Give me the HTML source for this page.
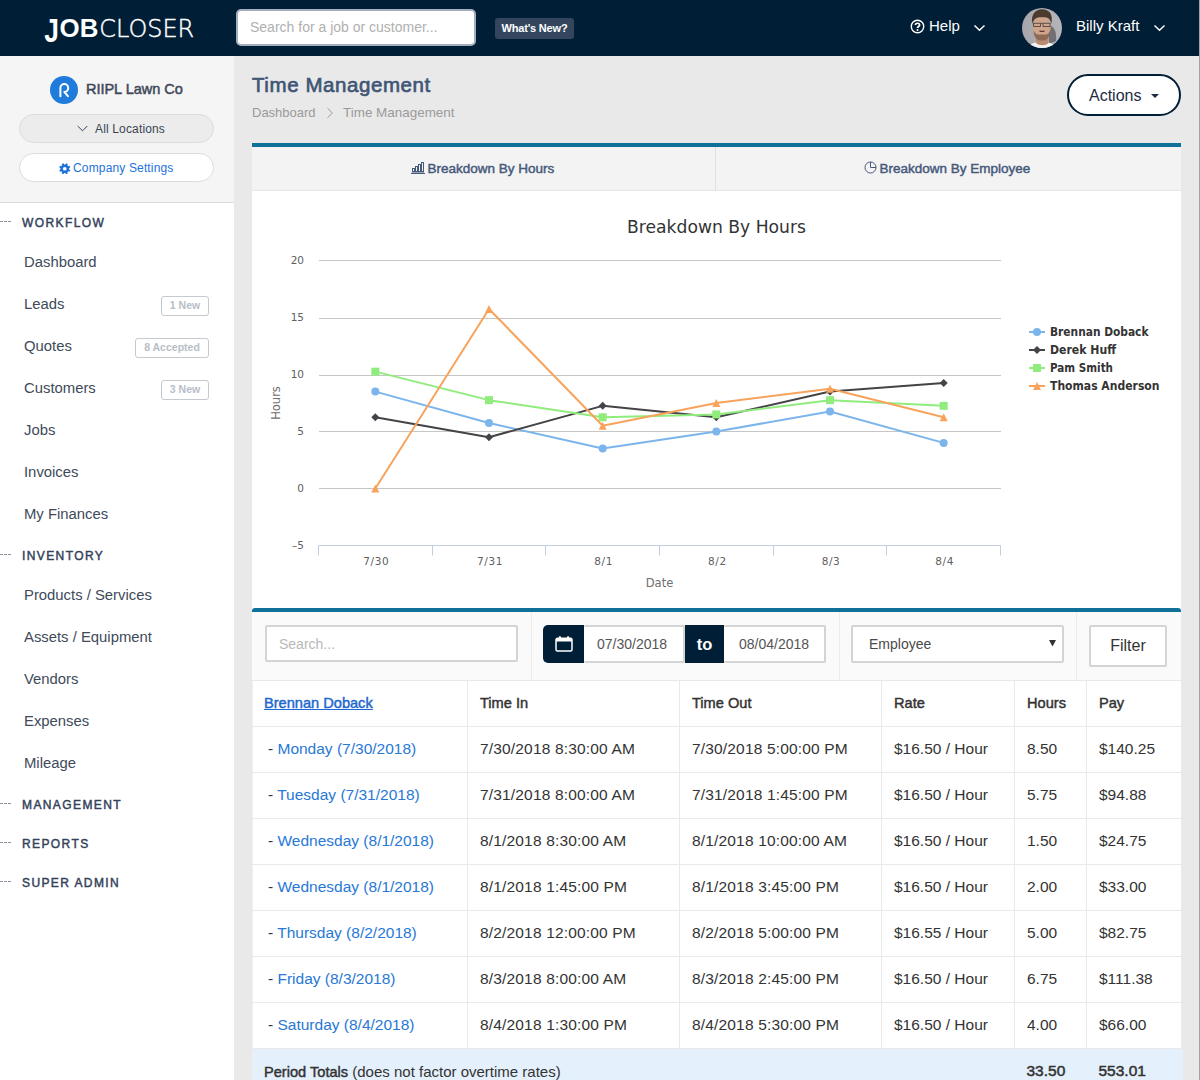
<!DOCTYPE html>
<html lang="en">
<head>
<meta charset="utf-8">
<title>Time Management - JobCloser</title>
<style>
*{box-sizing:border-box;margin:0;padding:0}
html,body{width:1200px;height:1080px;overflow:hidden}
body{position:relative;background:#e9e9e9;font-family:"Liberation Sans",sans-serif;font-size:15px;color:#333;}
.abs{position:absolute}
a{text-decoration:none;color:inherit}
/* header */
#hdr{position:absolute;left:0;top:0;width:1200px;height:56px;background:#001e36;}
#srch{position:absolute;left:236px;top:9px;width:240px;height:37px;background:#fff;border:2px solid #a3afbe;border-radius:5px;color:#b0b0b0;font-size:14px;line-height:33px;padding-left:12px;white-space:nowrap}
#wn{position:absolute;left:495px;top:18px;width:79px;height:21px;background:#33465e;border-radius:3px;color:#fff;font-weight:bold;font-size:11px;line-height:21px;text-align:center;white-space:nowrap;letter-spacing:-.2px}
.htxt{position:absolute;color:#fff;font-size:15px;line-height:20px;top:16.400px;white-space:nowrap}
#avatar{position:absolute;left:1022px;top:8px;width:40px;height:40px;border-radius:50%;overflow:hidden}
/* sidebar */
#side{position:absolute;left:0;top:56px;width:234px;height:1024px;background:#fff}
#sidetop{position:absolute;left:0;top:0;width:234px;height:147px;background:#f5f5f5;border-bottom:1px solid #dcdcdc}
#co{position:absolute;left:50px;top:20px;width:28px;height:28px;border-radius:50%;background:#1f7bdc}
#coname{position:absolute;left:86px;top:23px;font-size:14.5px;font-weight:normal;-webkit-text-stroke:.5px #3f4858;color:#3f4858;line-height:20px;white-space:nowrap;letter-spacing:-.02px}
.pill{position:absolute;left:19px;width:195px;height:29px;border-radius:15px;border:1px solid #dcdcdc;font-size:12px;letter-spacing:.15px;line-height:28px;text-align:center;white-space:nowrap}
#loc{top:58px;background:#ececec;color:#3a4454;padding-left:9px}
#cset{top:97px;background:#fff;color:#1c72dd;padding-right:2px}
.sec{position:absolute;left:22px;font-size:12px;font-weight:normal;-webkit-text-stroke:.45px #33425a;letter-spacing:1.4px;color:#33425a;line-height:16px;white-space:nowrap;margin-top:.3px}
.sec:before{content:"";position:absolute;left:-22px;top:6px;width:11px;height:0;border-top:1px dashed #8a93a0}
.nav{position:absolute;left:24px;font-size:14.85px;color:#404a5a;line-height:20px;white-space:nowrap}
.bdg{position:absolute;height:20px;border:1px solid #c4cacf;border-radius:3px;font-size:10.5px;font-weight:bold;color:#b7bec7;line-height:17.500px;text-align:center;background:#fff;white-space:nowrap}
/* main */
#title{position:absolute;left:252px;top:72px;font-size:20.5px;font-weight:normal;-webkit-text-stroke:.65px #3f5575;color:#3f5575;line-height:26px;white-space:nowrap;letter-spacing:.58px}
.bc{position:absolute;top:104px;font-size:13px;color:#9a9a9a;line-height:18px;white-space:nowrap}
#actions{position:absolute;left:1067px;top:74px;width:114px;height:42px;border:2px solid #001e36;border-radius:21px;background:#fff;color:#1d2c44;font-size:16px;line-height:38px;white-space:nowrap}
#card{position:absolute;left:252px;top:143px;width:929px;height:937px;background:#fff}
.bluebar{position:absolute;left:0;width:929px;height:4px;background:#0f7098}
#tabs{position:absolute;left:0;top:4px;width:929px;height:44px;background:#f3f3f3;border-bottom:1px solid #e6e6e6}
.tab{position:absolute;top:0;height:43px;line-height:43px;font-size:13.500px;font-weight:normal;-webkit-text-stroke:.45px #46597a;color:#46597a;white-space:nowrap}
#filters{position:absolute;left:0;top:469px;width:929px;height:69px;background:#fafafa;border-bottom:1px solid #e8e8e8}
.inp{position:absolute;background:#fff;border:2px solid #d4d4d4;border-radius:2px;font-size:14px;color:#555;white-space:nowrap}
.dk{position:absolute;background:#001e36;color:#fff}
table{position:absolute;left:0;top:538px;width:929px;border-left:1px solid #efefef;border-collapse:collapse;table-layout:fixed}
td,th{height:46px;border-bottom:1px solid #e9e9e9;border-left:1px solid #e9e9e9;padding:0 0 0 12px;text-align:left;font-size:15.5px;white-space:nowrap;vertical-align:middle;color:#333}
td:first-child,th:first-child{border-left:none;padding-left:11px}
th{font-weight:normal;-webkit-text-stroke:.45px;height:45px;font-size:14.600px}
td.ts{letter-spacing:.17px}
td.d{letter-spacing:0}
td a{color:#2878d6}
tr.tot td{background:#e4f0fb;border-left:none;height:46px}
#rstrip{position:absolute;left:1199px;top:0;width:1px;height:1080px;background:#a2a2a2}
</style>
</head>
<body>
<div id="hdr">
  <svg id="logo" class="abs" style="left:40px;top:0" width="160" height="56" viewBox="40 0 160 56" fill="#fff">
    <text transform="translate(44.2 42.2) scale(.8 1)" font-family="Liberation Sans, sans-serif" font-weight="bold" font-size="33">J</text>
    <text x="59.6" y="37.2" font-family="Liberation Sans, sans-serif" font-weight="bold" font-size="25.8" textLength="38.8" lengthAdjust="spacingAndGlyphs">OB</text>
    <text x="99.2" y="37.2" stroke="#fff" stroke-width=".45" font-family="DejaVu Sans Light, DejaVu Sans, Liberation Sans, sans-serif" font-weight="200" font-size="25.4" textLength="95" lengthAdjust="spacingAndGlyphs">CLOSER</text>
  </svg>
  <div id="srch">Search for a job or customer...</div>
  <div id="wn">What's New?</div>
  <svg class="abs" style="left:909.700px;top:18.600px" width="15" height="15" viewBox="0 0 15 15"><circle cx="7.5" cy="7.5" r="6.2" fill="none" stroke="#fff" stroke-width="1.4"/><path d="M5.4 6.1 C5.4 3.6 9.6 3.6 9.6 6.1 C9.6 7.6 7.5 7.5 7.5 9.1" fill="none" stroke="#fff" stroke-width="1.700"/><circle cx="7.500" cy="11" r="1" fill="#fff"/></svg>
  <div class="htxt" style="left:929px">Help</div>
  <svg class="abs" style="left:972.500px;top:23.500px" width="13" height="9" viewBox="0 0 13 9"><path d="M1.500 1.500 L6.500 6.200 L11.500 1.500" fill="none" stroke="#fff" stroke-width="1.5"/></svg>
  <div id="avatar"><svg width="40" height="40" viewBox="0 0 40 40"><defs><filter id="bl" x="-20%" y="-20%" width="140%" height="140%"><feGaussianBlur stdDeviation=".5"/></filter><linearGradient id="abg" x1="0" x2="1"><stop offset="0" stop-color="#a6a6ab"/><stop offset="1" stop-color="#b4b4b9"/></linearGradient></defs><rect width="40" height="40" fill="url(#abg)"/><g filter="url(#bl)"><path d="M27 17 C31 18 35 22 34 33 L27 36 Z" fill="#6f6f75"/><path d="M5 44 C7 35 12 34 20 34 C28 34 33 35 35 44 Z" fill="#f2f2f2"/><path d="M14 28 H26.500 V35 C24 38 17 38 14 35 Z" fill="#b98c72"/><ellipse cx="19.800" cy="19.500" rx="8.800" ry="11.500" fill="#cfa48b"/><path d="M11.500 22 C12 31.500 16 32.500 20 32.500 C24 32.500 27.500 31.500 28.300 22 C27 26.500 24 27 20 26.500 C16 27 13 26.500 11.500 22Z" fill="#8d6a55"/><path d="M10.300 16 C8.500 6 14 1.300 20 1.300 C27 1.300 31.500 6 29.300 16 C28.500 11 26 8.500 20 9.300 C14.500 8.500 11.500 11 10.300 16Z" fill="#4b3a2e"/><path d="M11 15.300 H28.700 M11.500 15.500 V18.500 H18.500 V15.500 M21 15.500 V18.500 H28 V15.500" fill="none" stroke="#3f3a3a" stroke-width=".8"/><path d="M17.500 22.800 Q20 24 22.500 22.800" stroke="#5a3a34" stroke-width="1.300" fill="none"/></g></svg></div>
  <div class="htxt" style="left:1076px">Billy Kraft</div>
  <svg class="abs" style="left:1153px;top:23.500px" width="13" height="9" viewBox="0 0 13 9"><path d="M1.500 1.500 L6.500 6.200 L11.500 1.500" fill="none" stroke="#fff" stroke-width="1.5"/></svg>
</div>

<div id="side">
  <div id="sidetop">
    <div id="co"><svg width="28" height="28" viewBox="0 0 28 28"><path d="M10.400 20.200 V12 A3.900 3.900 0 1 1 14.300 15.900 L17.900 20.200" fill="none" stroke="#fff" stroke-width="2" stroke-linecap="round" stroke-linejoin="round"/></svg></div>
    <div id="coname">RIIPL Lawn Co</div>
    <div class="pill" id="loc"><svg style="vertical-align:middle;margin-right:7px;position:relative;top:-1px" width="11" height="7" viewBox="0 0 11 7"><path d="M.7 1 L5.5 5.800 L10.300 1" fill="none" stroke="#3a4454" stroke-width="1"/></svg>All Locations</div>
    <div class="pill" id="cset"><svg style="vertical-align:middle;margin-left:1.500px;margin-right:2.500px;position:relative;top:-.5px" width="11.500" height="11.500" viewBox="0 0 24 24"><path fill="#1c72dd" fill-rule="evenodd" d="M21.09 13.44 L23.53 14.53 L21.94 18.36 L19.44 17.41 L17.41 19.44 L18.36 21.94 L14.53 23.53 L13.44 21.09 L10.56 21.09 L9.47 23.53 L5.64 21.94 L6.59 19.44 L4.56 17.41 L2.06 18.36 L0.47 14.53 L2.91 13.44 L2.91 10.56 L0.47 9.47 L2.06 5.64 L4.56 6.59 L6.59 4.56 L5.64 2.06 L9.47 0.47 L10.56 2.91 L13.44 2.91 L14.53 0.47 L18.36 2.06 L17.41 4.56 L19.44 6.59 L21.94 5.64 L23.53 9.47 L21.09 10.56Z M15.90 12.00 A3.9 3.9 0 1 0 8.10 12.00 A3.9 3.9 0 1 0 15.90 12.00Z"/></svg>Company Settings</div>
  </div>
  <div class="sec" style="top:159px">WORKFLOW</div>
  <div class="nav" style="top:196px">Dashboard</div>
  <div class="nav" style="top:238px">Leads</div><div class="bdg" style="left:161px;top:240px;width:48px">1 New</div>
  <div class="nav" style="top:280px">Quotes</div><div class="bdg" style="left:135px;top:282px;width:74px">8 Accepted</div>
  <div class="nav" style="top:322px">Customers</div><div class="bdg" style="left:161px;top:324px;width:48px">3 New</div>
  <div class="nav" style="top:364px">Jobs</div>
  <div class="nav" style="top:406px">Invoices</div>
  <div class="nav" style="top:448px">My Finances</div>
  <div class="sec" style="top:492px">INVENTORY</div>
  <div class="nav" style="top:529px">Products / Services</div>
  <div class="nav" style="top:571px">Assets / Equipment</div>
  <div class="nav" style="top:613px">Vendors</div>
  <div class="nav" style="top:655px">Expenses</div>
  <div class="nav" style="top:697px">Mileage</div>
  <div class="sec" style="top:741px">MANAGEMENT</div>
  <div class="sec" style="top:780px">REPORTS</div>
  <div class="sec" style="top:819px">SUPER ADMIN</div>
</div>

<div id="title">Time Management</div>
<div class="bc" style="left:252px">Dashboard</div>
<svg class="abs" style="left:326.300px;top:106.500px" width="8" height="12" viewBox="0 0 8 12"><path d="M1.500 1.300 L6.300 6 L1.500 10.700" fill="none" stroke="#9a9a9a" stroke-width="1"/></svg>
<div class="bc" style="left:343px;font-size:13.45px">Time Management</div>
<div id="actions"><span style="position:absolute;left:20px;top:1px">Actions</span><svg class="abs" style="left:82px;top:18px" width="8" height="4" viewBox="0 0 8 4"><path d="M0 0 H8 L4 4Z" fill="#1d2c44"/></svg></div>

<div id="card">
  <div class="bluebar" style="top:0"></div>
  <div id="tabs">
    <div class="abs" style="left:463px;top:0;width:1px;height:43px;background:#e0e0e0"></div>
    <svg class="abs" style="left:159px;top:15px" width="14" height="12" viewBox="0 0 14 12"><g fill="none" stroke="#46597a" stroke-width="1"><rect x="1.5" y="6.5" width="2" height="3.500"/><rect x="4.500" y="4.500" width="2" height="5.500"/><rect x="7.500" y="2.500" width="2" height="7.500"/><rect x="10.500" y=".5" width="2" height="9.500"/><path d="M0 11.500 H14"/></g></svg>
    <div class="tab" style="left:175.500px">Breakdown By Hours</div>
    <svg class="abs" style="left:612px;top:14px" width="13" height="13" viewBox="0 0 13 13"><g fill="none" stroke="#46597a" stroke-width="1"><circle cx="6.500" cy="6.500" r="5.500"/><path d="M6.500 1 V6.500 H12"/></g></svg>
    <div class="tab" style="left:627.500px">Breakdown By Employee</div>
  </div>
  <!--CHART_S--><svg class="abs" style="left:0;top:48px" width="929" height="417" viewBox="0 0 929 417" font-family="DejaVu Sans, Liberation Sans, sans-serif">
<text x="464.5" y="42" text-anchor="middle" font-size="17" fill="#333333" textLength="179" lengthAdjust="spacingAndGlyphs">Breakdown By Hours</text>
<path d="M67 69.5 H749" stroke="#c6c6c6" stroke-width="1" fill="none"/>
<path d="M67 127.5 H749" stroke="#c6c6c6" stroke-width="1" fill="none"/>
<path d="M67 184.5 H749" stroke="#c6c6c6" stroke-width="1" fill="none"/>
<path d="M67 240.5 H749" stroke="#c6c6c6" stroke-width="1" fill="none"/>
<path d="M67 297.5 H749" stroke="#c6c6c6" stroke-width="1" fill="none"/>
<path d="M66.5 354.5 H748.5" stroke="#c0d0e0" stroke-width="1" fill="none"/>
<path d="M66.5 354.5 V364.5" stroke="#c0d0e0" stroke-width="1" fill="none"/>
<path d="M180.5 354.5 V364.5" stroke="#c0d0e0" stroke-width="1" fill="none"/>
<path d="M293.5 354.5 V364.5" stroke="#c0d0e0" stroke-width="1" fill="none"/>
<path d="M407.5 354.5 V364.5" stroke="#c0d0e0" stroke-width="1" fill="none"/>
<path d="M521.5 354.5 V364.5" stroke="#c0d0e0" stroke-width="1" fill="none"/>
<path d="M634.5 354.5 V364.5" stroke="#c0d0e0" stroke-width="1" fill="none"/>
<path d="M748.5 354.5 V364.5" stroke="#c0d0e0" stroke-width="1" fill="none"/>
<text x="52" y="72.8" text-anchor="end" font-size="10.5" fill="#606060">20</text>
<text x="52" y="129.8" text-anchor="end" font-size="10.5" fill="#606060">15</text>
<text x="52" y="186.8" text-anchor="end" font-size="10.5" fill="#606060">10</text>
<text x="52" y="243.8" text-anchor="end" font-size="10.5" fill="#606060">5</text>
<text x="52" y="300.8" text-anchor="end" font-size="10.5" fill="#606060">0</text>
<text x="52" y="357.8" text-anchor="end" font-size="10.5" fill="#606060">–5</text>
<text x="124.33" y="374" text-anchor="middle" font-size="10.5" fill="#606060" letter-spacing=".6">7/30</text>
<text x="238.0" y="374" text-anchor="middle" font-size="10.5" fill="#606060" letter-spacing=".6">7/31</text>
<text x="351.67" y="374" text-anchor="middle" font-size="10.5" fill="#606060" letter-spacing=".6">8/1</text>
<text x="465.33" y="374" text-anchor="middle" font-size="10.5" fill="#606060" letter-spacing=".6">8/2</text>
<text x="579.0" y="374" text-anchor="middle" font-size="10.5" fill="#606060" letter-spacing=".6">8/3</text>
<text x="692.67" y="374" text-anchor="middle" font-size="10.5" fill="#606060" letter-spacing=".6">8/4</text>
<text x="407.5" y="396" text-anchor="middle" font-size="11.5" fill="#707070">Date</text>
<text transform="translate(28 212) rotate(-90)" text-anchor="middle" font-size="11.5" fill="#707070">Hours</text>
<path d="M123.33 200.6 L237.0 231.95 L350.67 257.6 L464.33 240.5 L578.0 220.55 L691.67 251.9" stroke="#7cb5ec" stroke-width="2" fill="none" stroke-linejoin="round" stroke-linecap="round"/>
<circle cx="123.33" cy="200.6" r="4" fill="#7cb5ec"/>
<circle cx="237.0" cy="231.95" r="4" fill="#7cb5ec"/>
<circle cx="350.67" cy="257.6" r="4" fill="#7cb5ec"/>
<circle cx="464.33" cy="240.5" r="4" fill="#7cb5ec"/>
<circle cx="578.0" cy="220.55" r="4" fill="#7cb5ec"/>
<circle cx="691.67" cy="251.9" r="4" fill="#7cb5ec"/>
<path d="M123.33 226.25 L237.0 246.2 L350.67 214.85 L464.33 226.25 L578.0 200.6 L691.67 192.05" stroke="#434348" stroke-width="2" fill="none" stroke-linejoin="round" stroke-linecap="round"/>
<path d="M123.33 222.25 L127.33 226.25 L123.33 230.25 L119.33 226.25Z" fill="#434348"/>
<path d="M237.0 242.2 L241.0 246.2 L237.0 250.2 L233.0 246.2Z" fill="#434348"/>
<path d="M350.67 210.85 L354.67 214.85 L350.67 218.85 L346.67 214.85Z" fill="#434348"/>
<path d="M464.33 222.25 L468.33 226.25 L464.33 230.25 L460.33 226.25Z" fill="#434348"/>
<path d="M578.0 196.6 L582.0 200.6 L578.0 204.6 L574.0 200.6Z" fill="#434348"/>
<path d="M691.67 188.05 L695.67 192.05 L691.67 196.05 L687.67 192.05Z" fill="#434348"/>
<path d="M123.33 180.65 L237.0 209.15 L350.67 226.25 L464.33 223.4 L578.0 209.15 L691.67 214.85" stroke="#90ed7d" stroke-width="2" fill="none" stroke-linejoin="round" stroke-linecap="round"/>
<rect x="119.33" y="176.65" width="8" height="8" fill="#90ed7d"/>
<rect x="233.0" y="205.15" width="8" height="8" fill="#90ed7d"/>
<rect x="346.67" y="222.25" width="8" height="8" fill="#90ed7d"/>
<rect x="460.33" y="219.4" width="8" height="8" fill="#90ed7d"/>
<rect x="574.0" y="205.15" width="8" height="8" fill="#90ed7d"/>
<rect x="687.67" y="210.85" width="8" height="8" fill="#90ed7d"/>
<path d="M123.33 297.5 L237.0 117.95 L350.67 234.8 L464.33 212.0 L578.0 197.75 L691.67 226.25" stroke="#f7a35c" stroke-width="2" fill="none" stroke-linejoin="round" stroke-linecap="round"/>
<path d="M123.33 293.5 L127.33 301.5 L119.33 301.5Z" fill="#f7a35c"/>
<path d="M237.0 113.95 L241.0 121.95 L233.0 121.95Z" fill="#f7a35c"/>
<path d="M350.67 230.8 L354.67 238.8 L346.67 238.8Z" fill="#f7a35c"/>
<path d="M464.33 208.0 L468.33 216.0 L460.33 216.0Z" fill="#f7a35c"/>
<path d="M578.0 193.75 L582.0 201.75 L574.0 201.75Z" fill="#f7a35c"/>
<path d="M691.67 222.25 L695.67 230.25 L687.67 230.25Z" fill="#f7a35c"/>
<path d="M777 141 H793" stroke="#7cb5ec" stroke-width="2"/>
<circle cx="785" cy="141" r="4" fill="#7cb5ec"/>
<text x="798" y="145" font-size="11.5" font-weight="bold" fill="#333333" textLength="98.5" lengthAdjust="spacingAndGlyphs">Brennan Doback</text>
<path d="M777 159 H793" stroke="#434348" stroke-width="2"/>
<path d="M785 155 L789 159 L785 163 L781 159Z" fill="#434348"/>
<text x="798" y="163" font-size="11.5" font-weight="bold" fill="#333333" textLength="66" lengthAdjust="spacingAndGlyphs">Derek Huff</text>
<path d="M777 177 H793" stroke="#90ed7d" stroke-width="2"/>
<rect x="781" y="173" width="8" height="8" fill="#90ed7d"/>
<text x="798" y="181" font-size="11.5" font-weight="bold" fill="#333333" textLength="63" lengthAdjust="spacingAndGlyphs">Pam Smith</text>
<path d="M777 195 H793" stroke="#f7a35c" stroke-width="2"/>
<path d="M785 191 L789 199 L781 199Z" fill="#f7a35c"/>
<text x="798" y="199" font-size="11.5" font-weight="bold" fill="#333333" textLength="109.5" lengthAdjust="spacingAndGlyphs">Thomas Anderson</text>
</svg><!--CHART_E-->
  <div class="bluebar" style="top:465px;border-radius:3px 3px 0 0"></div>
  <div id="filters">
    <div class="abs" style="left:279px;top:0;width:1px;height:68px;background:#ececec"></div>
    <div class="abs" style="left:587px;top:0;width:1px;height:68px;background:#ececec"></div>
    <div class="abs" style="left:824px;top:0;width:1px;height:68px;background:#ececec"></div>
    <div class="inp" style="left:13px;top:13px;width:253px;height:37px;line-height:35px;padding-left:12px;color:#b8b8b8">Search...</div>
    <div class="dk" style="left:291px;top:13px;width:41px;height:38px;border-radius:5px 0 0 5px"><svg class="abs" style="left:12px;top:11px" width="18" height="16" viewBox="0 0 18 16"><rect x="1" y="2.300" width="16" height="12.700" rx="1.500" fill="none" stroke="#fff" stroke-width="1.500"/><rect x="1" y="2.300" width="16" height="3.200" fill="#fff"/><rect x="3.800" y=".3" width="2.200" height="3" rx=".7" fill="#fff"/><rect x="12" y=".3" width="2.200" height="3" rx=".7" fill="#fff"/></svg></div>
    <div class="inp" style="left:332px;top:13px;width:101px;height:38px;line-height:34px;padding-left:13px;border-left:none">07/30/2018</div>
    <div class="dk" style="left:433px;top:13px;width:39px;height:38px;line-height:39px;text-align:center;font-weight:bold;font-size:16.5px">to</div>
    <div class="inp" style="left:472px;top:13px;width:102px;height:38px;line-height:34px;padding-left:15px;border-left:none">08/04/2018</div>
    <div class="inp" style="left:599px;top:13px;width:213px;height:38px;line-height:34px;padding-left:16px;font-size:14px;color:#4a4a4a">Employee<svg class="abs" style="right:6px;top:13px" width="7" height="7" viewBox="0 0 7 7"><path d="M0 0 H7 L3.5 6.5Z" fill="#333"/></svg></div>
    <div class="inp" style="left:837px;top:13px;width:78px;height:42px;line-height:38px;text-align:center;font-size:16px;color:#333">Filter</div>
  </div>
  <!--TABLE_S--><table><colgroup><col style="width:215px"><col style="width:212px"><col style="width:202px"><col style="width:133px"><col style="width:72px"><col style="width:96px"></colgroup>
<tr><th><a href="#" style="color:#1c68d0;text-decoration:underline">Brennan Doback</a></th><th>Time In</th><th>Time Out</th><th>Rate</th><th>Hours</th><th>Pay</th></tr>
<tr><td class="d" style="padding-left:15px">- <a href="#">Monday (7/30/2018)</a></td><td class="ts">7/30/2018 8:30:00 AM</td><td class="ts">7/30/2018 5:00:00 PM</td><td>$16.50 / Hour</td><td>8.50</td><td>$140.25</td></tr>
<tr><td class="d" style="padding-left:15px">- <a href="#">Tuesday (7/31/2018)</a></td><td class="ts">7/31/2018 8:00:00 AM</td><td class="ts">7/31/2018 1:45:00 PM</td><td>$16.50 / Hour</td><td>5.75</td><td>$94.88</td></tr>
<tr><td class="d" style="padding-left:15px">- <a href="#">Wednesday (8/1/2018)</a></td><td class="ts">8/1/2018 8:30:00 AM</td><td class="ts">8/1/2018 10:00:00 AM</td><td>$16.50 / Hour</td><td>1.50</td><td>$24.75</td></tr>
<tr><td class="d" style="padding-left:15px">- <a href="#">Wednesday (8/1/2018)</a></td><td class="ts">8/1/2018 1:45:00 PM</td><td class="ts">8/1/2018 3:45:00 PM</td><td>$16.50 / Hour</td><td>2.00</td><td>$33.00</td></tr>
<tr><td class="d" style="padding-left:15px">- <a href="#">Thursday (8/2/2018)</a></td><td class="ts">8/2/2018 12:00:00 PM</td><td class="ts">8/2/2018 5:00:00 PM</td><td>$16.55 / Hour</td><td>5.00</td><td>$82.75</td></tr>
<tr><td class="d" style="padding-left:15px">- <a href="#">Friday (8/3/2018)</a></td><td class="ts">8/3/2018 8:00:00 AM</td><td class="ts">8/3/2018 2:45:00 PM</td><td>$16.50 / Hour</td><td>6.75</td><td>$111.38</td></tr>
<tr><td class="d" style="padding-left:15px">- <a href="#">Saturday (8/4/2018)</a></td><td class="ts">8/4/2018 1:30:00 PM</td><td class="ts">8/4/2018 5:30:00 PM</td><td>$16.50 / Hour</td><td>4.00</td><td>$66.00</td></tr>
<tr class="tot"><td colspan="4" style="font-size:15px"><span style="font-size:14.600px;-webkit-text-stroke:.45px">Period Totals</span> (does not factor overtime rates)</td><td style="-webkit-text-stroke:.5px">33.50</td><td style="-webkit-text-stroke:.5px">553.01</td></tr>
</table><!--TABLE_E-->
</div>
<div id="rstrip"></div>
</body>
</html>
